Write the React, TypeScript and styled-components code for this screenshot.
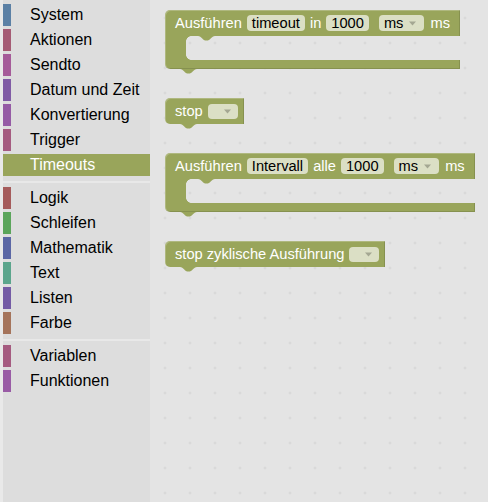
import React from "react";
import styled, { createGlobalStyle } from "styled-components";

const OLIVE = "#99a55b";
const WS_BG = "#e4e4e4";

const Global = createGlobalStyle`
  html, body { margin: 0; padding: 0; height: 100%; }
  body {
    font-family: "Liberation Sans", Arial, sans-serif;
    background: #e9e9e9;
    overflow: hidden;
  }
  #root { height: 100%; }
`;

const Page = styled.div`
  display: flex;
  height: 502px;
  padding-left: 3px;
  box-sizing: border-box;
  background: #e9e9e9;
`;

const Sidebar = styled.nav`
  width: 147px;
  flex-shrink: 0;
  background: #dddddd;
  padding-top: 4px;
  box-sizing: border-box;
  display: flex;
  flex-direction: column;
`;

const Item = styled.div<{ $color: string; $selected?: boolean }>`
  height: 22px;
  margin-bottom: 3px;
  display: flex;
  align-items: center;
  background: ${(p) => (p.$selected ? p.$color : "transparent")};
  color: ${(p) => (p.$selected ? "#ffffff" : "#000000")};
  font-size: 16px;
  line-height: 22px;
  white-space: nowrap;
`;

const Swatch = styled.span<{ $color: string }>`
  width: 8px;
  height: 100%;
  flex-shrink: 0;
  margin-right: 19px;
  background: ${(p) => p.$color};
`;

const Separator = styled.div`
  height: 2px;
  margin: 2px 0 4px;
  background: #e8e8e8;
`;

const Workspace = styled.main`
  flex: 1;
  background-color: ${WS_BG};
  background-image: radial-gradient(circle, #d3d3d3 0.9px, transparent 1.4px);
  background-size: 25px 25px;
  background-position: 2.5px 5.5px;
  padding: 10px 0 0 15px;
  display: flex;
  flex-direction: column;
  align-items: flex-start;
  gap: 29px;
`;

const Block = styled.div`
  position: relative;
  display: flex;
  flex-direction: column;
`;

const Header = styled.div<{ $radius: string; $padRight: number }>`
  display: flex;
  align-items: center;
  gap: 5px;
  padding: 5px ${(p) => p.$padRight}px 5px 10px;
  background: ${OLIVE};
  border-radius: ${(p) => p.$radius};
  box-shadow: inset 1px 1px 0 rgba(255, 255, 255, 0.22), inset -1px 0 0 rgba(0, 0, 0, 0.12);
  color: #ffffff;
  font-size: 11pt;
  line-height: 16px;
  white-space: nowrap;
`;

const Label = styled.span<{ $shift?: number }>`
  margin-left: ${(p) => p.$shift ?? 0}px;
`;

const Pill = styled.span`
  display: inline-flex;
  align-items: center;
  height: 16px;
  padding: 0 5px;
  border-radius: 4px;
  background: #dbdfc5;
  color: #000000;
  font-size: 11pt;
  line-height: 16px;
`;

const Dropdown = styled.span<{ $empty?: boolean; $shift?: number }>`
  display: inline-flex;
  align-items: center;
  gap: 6px;
  height: ${(p) => (p.$empty ? 15 : 16)}px;
  padding: ${(p) => (p.$empty ? "0 7px 0 16px" : "0 8px 0 5px")};
  margin-left: ${(p) => p.$shift ?? 0}px;
  border-radius: 4px;
  background: #dbdfc5;
  color: #000000;
  font-size: 11pt;
  line-height: 16px;
`;

const Arrow = styled.svg`
  width: 7px;
  height: 5px;
  display: block;
  flex-shrink: 0;
`;

const Inner = styled.div`
  display: flex;
  height: 24px;
`;

const Arm = styled.div`
  width: 21px;
  background: ${OLIVE};
  box-shadow: inset 1px 0 0 rgba(255, 255, 255, 0.22);
`;

const Mouth = styled.div`
  flex: 1;
  position: relative;
  &::before,
  &::after {
    content: "";
    position: absolute;
    left: 0;
    width: 5px;
    height: 5px;
  }
  &::before {
    top: 0;
    background: radial-gradient(circle at 100% 100%, transparent 4.5px, ${OLIVE} 5px);
  }
  &::after {
    bottom: 0;
    background: radial-gradient(circle at 100% 0, transparent 4.5px, ${OLIVE} 5px);
  }
`;

const Footer = styled.div`
  height: 9px;
  background: ${OLIVE};
  border-radius: 0 0 0 5px;
  box-shadow: inset 1px 0 0 rgba(255, 255, 255, 0.22), inset -1px -1px 0 rgba(0, 0, 0, 0.12);
`;

const Notch = styled.svg<{ $top?: number; $bottom?: number; $left: number }>`
  position: absolute;
  left: ${(p) => p.$left}px;
  ${(p) => (p.$top !== undefined ? `top: ${p.$top}px;` : "")}
  ${(p) => (p.$bottom !== undefined ? `bottom: ${p.$bottom}px;` : "")}
  width: 17px;
  height: 5px;
  display: block;
  z-index: 1;
`;

const NOTCH_PATH = "M0,0 C3.5,0 4.5,4.6 8.5,4.6 C12.5,4.6 13.5,0 17,0 Z";

const DownArrow = () => (
  <Arrow viewBox="0 0 7 5">
    <polygon points="0,0.5 7,0.5 3.5,4.5" fill="#a4a792" />
  </Arrow>
);

const BottomTab = () => (
  <Notch $bottom={-5} $left={15} viewBox="0 0 17 5">
    <path d={NOTCH_PATH} fill={OLIVE} />
  </Notch>
);

const InnerTab = () => (
  <Notch $top={0} $left={12} viewBox="0 0 17 5">
    <path d={NOTCH_PATH} fill={OLIVE} />
  </Notch>
);

type Cat = { name: string; color: string; selected?: boolean };

const groups: Cat[][] = [
  [
    { name: "System", color: "#5b80a5" },
    { name: "Aktionen", color: "#a55b74" },
    { name: "Sendto", color: "#a55b99" },
    { name: "Datum und Zeit", color: "#805ba5" },
    { name: "Konvertierung", color: "#955ba5" },
    { name: "Trigger", color: "#a55b80" },
    { name: "Timeouts", color: OLIVE, selected: true },
  ],
  [
    { name: "Logik", color: "#a55b5b" },
    { name: "Schleifen", color: "#5ba55b" },
    { name: "Mathematik", color: "#5b67a5" },
    { name: "Text", color: "#5ba58c" },
    { name: "Listen", color: "#745ba5" },
    { name: "Farbe", color: "#a5745b" },
  ],
  [
    { name: "Variablen", color: "#a55b80" },
    { name: "Funktionen", color: "#995ba5" },
  ],
];

const CBlock = ({ name, verb, value }: { name: string; verb: string; value: string }) => (
  <Block>
    <Header $radius="5px 0 0 0" $padRight={10}>
      <Label>Ausführen</Label>
      <Pill>{name}</Pill>
      <Label>{verb}</Label>
      <Pill>{value}</Pill>
      <Dropdown $shift={5}>
        ms
        <DownArrow />
      </Dropdown>
      <Label $shift={1}>ms</Label>
    </Header>
    <Inner>
      <Arm />
      <Mouth>
        <InnerTab />
      </Mouth>
    </Inner>
    <Footer />
    <BottomTab />
  </Block>
);

const StopBlock = ({ text }: { text: string }) => (
  <Block>
    <Header $radius="5px 0 0 5px" $padRight={6}>
      <Label>{text}</Label>
      <Dropdown $empty>
        <DownArrow />
      </Dropdown>
    </Header>
    <BottomTab />
  </Block>
);

export default function App() {
  return (
    <>
      <Global />
      <Page>
        <Sidebar>
          {groups.map((g, gi) => (
            <React.Fragment key={gi}>
              {gi > 0 && <Separator />}
              {g.map((c) => (
                <Item key={c.name} $color={c.color} $selected={c.selected}>
                  <Swatch $color={c.color} />
                  {c.name}
                </Item>
              ))}
            </React.Fragment>
          ))}
        </Sidebar>
        <Workspace>
          <CBlock name="timeout" verb="in" value="1000" />
          <StopBlock text="stop" />
          <CBlock name="Intervall" verb="alle" value="1000" />
          <StopBlock text="stop zyklische Ausführung" />
        </Workspace>
      </Page>
    </>
  );
}
